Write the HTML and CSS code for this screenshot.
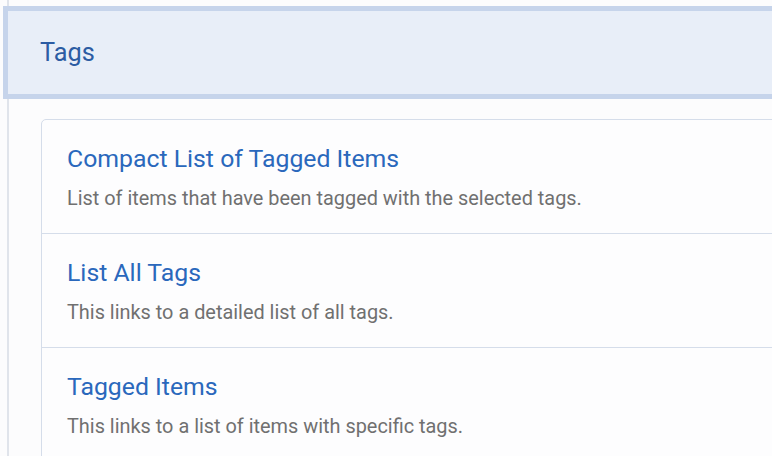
FILE: index.html
```html
<!DOCTYPE html>
<html lang="en">
<head>
<meta charset="utf-8">
<title>Tags</title>
<link rel="stylesheet" href="styles.css">
</head>
<body>
<div class="page">
  <div class="header"><h1 class="header-title">Tags</h1></div>
  <div class="content">
    <div class="card">
      <div class="item">
        <a class="item-title" href="#">Compact List of Tagged Items</a>
        <p class="item-desc">List of items that have been tagged with the selected tags.</p>
      </div>
      <div class="item">
        <a class="item-title" href="#">List All Tags</a>
        <p class="item-desc">This links to a detailed list of all tags.</p>
      </div>
      <div class="item">
        <a class="item-title" href="#">Tagged Items</a>
        <p class="item-desc">This links to a list of items with specific tags.</p>
      </div>
    </div>
  </div>
</div>
</body>
</html>
```
FILE: styles.css
```css
html, body {
  margin: 0;
  padding: 0;
  height: 100%;
  overflow: hidden;
}
body {
  background: #fcfcfd linear-gradient(#e0e4eb, #e0e4eb) 7px 0 / 2px 100% no-repeat;
  font-family: Roboto, "Noto Sans", sans-serif;
}
.page {
  padding-left: 3px;
}
.header {
  margin-top: 6px;
  margin-right: -20px;
  background: #e8eef8;
  border: 5px solid #c6d4eb;
  border-right: none;
  padding: 27px 0 27px 32px;
}
.header-title {
  margin: 0;
  font-size: 25.3px;
  line-height: 29px;
  font-weight: 400;
  color: #2c5ca3;
}
.content {
  padding: 20px 0 0 38px;
}
.card {
  margin-right: -20px;
  background: #fdfdfe;
  border: 1px solid #d5ddea;
  border-radius: 5px;
}
.item {
  padding: 24px 25px 20px 25px;
  border-bottom: 1px solid #d5ddea;
}
.item:last-child {
  border-bottom: none;
}
.item-title {
  display: block;
  font-size: 24.8px;
  line-height: 29px;
  color: #2a68bc;
  text-decoration: none;
}
.item-desc {
  margin: 11px 0 0;
  font-size: 19.9px;
  line-height: 29px;
  color: #707070;
}
```
